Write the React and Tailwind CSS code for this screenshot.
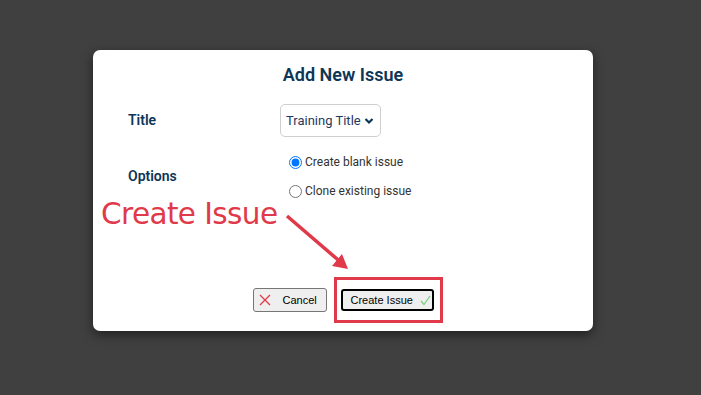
import React from "react";

export default function App() {
  return (
    <div className="w-[701px] h-[395px] bg-[#404040] overflow-hidden pt-[50px] pl-[93px]">
      <div className="relative w-[500px] h-[281px] bg-white rounded-[7px] shadow-[0_4px_12px_rgba(0,0,0,0.5)] font-['Roboto',sans-serif]">
        <div className="pt-[14px] text-center text-[18px] font-semibold text-[#0d3556] leading-[22px]">Add New Issue</div>
        <div className="flex items-center mt-[18px] h-[33px] pl-[35px]">
          <div className="w-[152px] text-[14px] font-semibold text-[#0d3556]">Title</div>
          <div className="flex items-center h-[33px] w-[101px] border border-[#cfcfcf] rounded-[5px] pl-[5px] pr-[6px] text-[13px] text-[#1f3a60] justify-between whitespace-nowrap">
            <span>Training Title</span>
            <svg width="10" height="8" viewBox="0 0 10 8" className="shrink-0"><path d="M1.5 2 L5 5.5 L8.5 2" fill="none" stroke="#0d3556" strokeWidth="2.2" /></svg>
          </div>
        </div>
        <div className="flex items-center mt-[17px] pl-[35px]">
          <div className="w-[161px] text-[14px] font-semibold text-[#0d3556]">Options</div>
          <div className="flex flex-col gap-[13px] text-[12px] text-[#333] whitespace-nowrap">
            <label className="flex items-center gap-[3px] h-[16px]">
              <input type="radio" name="opt" defaultChecked className="m-0 w-[13px] h-[13px]" />
              <span>Create blank issue</span>
            </label>
            <label className="flex items-center gap-[3px] h-[16px]">
              <input type="radio" name="opt" className="m-0 w-[13px] h-[13px]" />
              <span>Clone existing issue</span>
            </label>
          </div>
        </div>
        <div className="absolute left-0 right-0 top-[238px] flex justify-center gap-[14px] font-['Liberation_Sans',sans-serif] text-[11px] text-black whitespace-nowrap">
          <button className="flex items-center w-[74px] h-[24px] border border-[#767676] rounded-[3px] bg-[#efefef] pl-[5px]">
            <svg width="12" height="12" viewBox="0 0 12 12" className="shrink-0"><path d="M1 1 L11 11 M11 1 L1 11" stroke="#e0394a" strokeWidth="1.3" /></svg>
            <span className="ml-[12px]">Cancel</span>
          </button>
          <button className="flex items-center w-[93px] h-[22px] mt-[1px] border-2 border-black rounded-[3px] bg-[#efefef] pl-[8px]">
            <span>Create Issue</span>
            <svg className="ml-[7px] shrink-0" width="11" height="11" viewBox="0 0 11 11"><path d="M1 6 L4 9.5 L10 1" fill="none" stroke="#7ed07e" strokeWidth="1.3" /></svg>
          </button>
        </div>
        <div className="absolute left-[241px] top-[227px] w-[109px] h-[46px] border-[3px] border-[#e0394a]"></div>
        <div className="absolute left-[8px] top-[144px] text-[29.5px] leading-[40px] text-[#e0394a] font-['DejaVu_Sans',sans-serif] tracking-[-0.6px] whitespace-nowrap">Create Issue</div>
        <svg className="absolute left-[187px] top-[158px]" width="80" height="70" viewBox="0 0 80 70">
          <path d="M7 8 L64 57" stroke="#e0394a" strokeWidth="3.5" />
          <path d="M52 58 L68 61 L62 46 Z" fill="#e0394a" />
        </svg>
      </div>
    </div>
  );
}
